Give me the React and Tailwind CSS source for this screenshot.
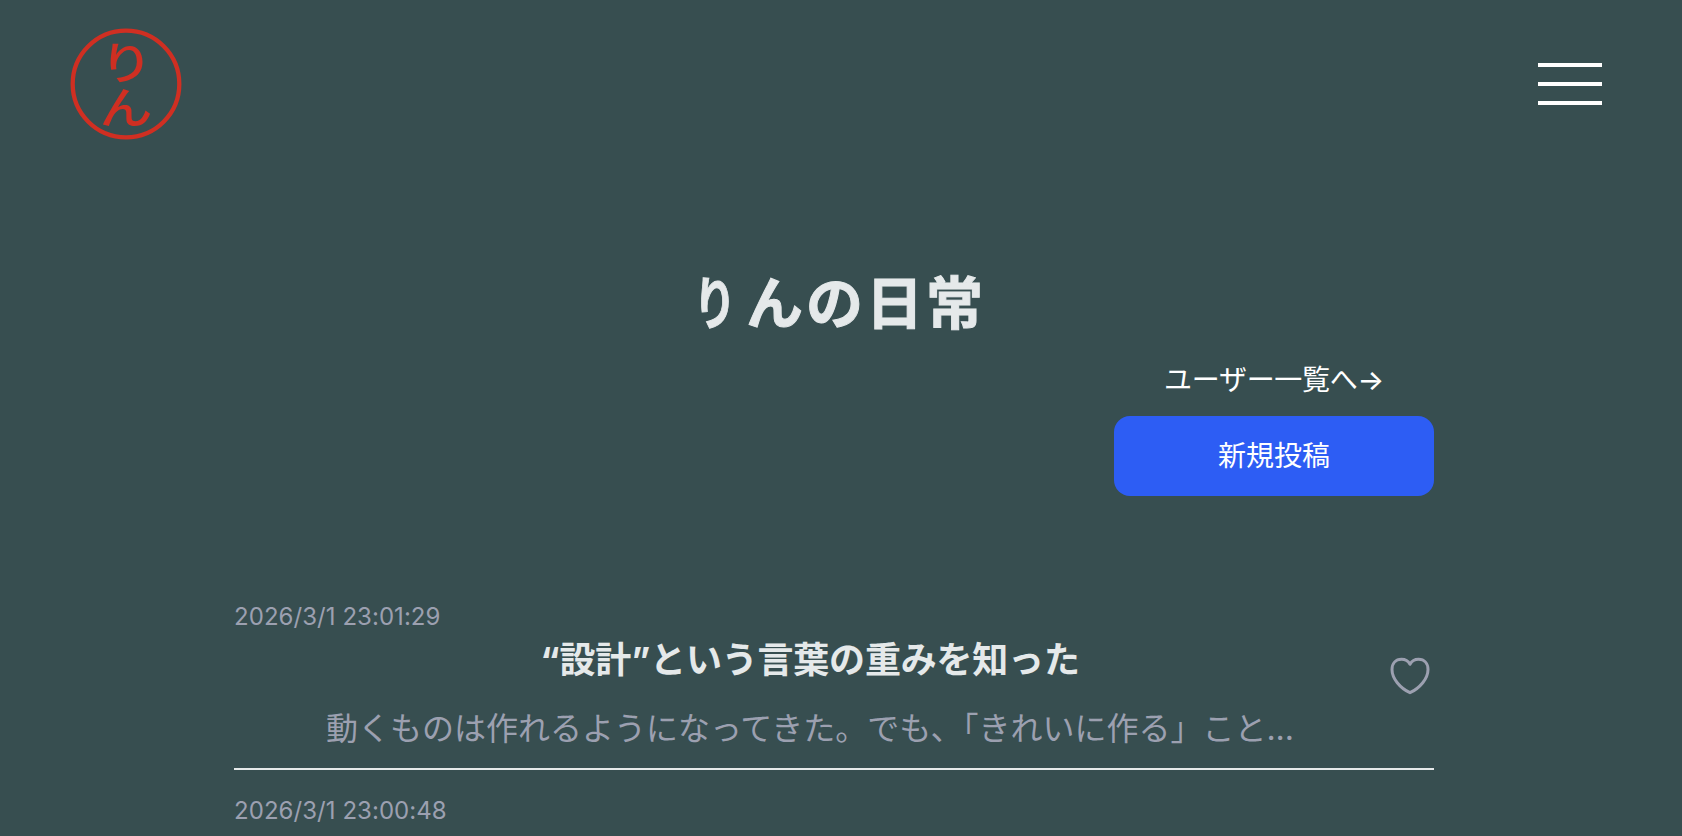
import React from "react";

const posts = [
  {
    id: 1,
    date: "2026/3/1 23:01:29",
    title: "“設計”という言葉の重みを知った",
    excerpt: "動くものは作れるようになってきた。でも、「きれいに作る」こと...",
  },
  { id: 2, date: "2026/3/1 23:00:48", title: "", excerpt: "" },
];

const HeartIcon = () => (
  <svg viewBox="0 0 48 48" className="w-12 h-12" fill="none" stroke="currentColor" strokeWidth="3" strokeLinejoin="round">
    <path d="M24 12.3C22.200 9 19.500 7.300 15.500 7.300C9.500 7.300 6 11.500 6 17.500C6 26.500 14 36 24 40.700C34 36 42 26.500 42 17.500C42 11.500 38.500 7.300 32.500 7.300C28.500 7.300 25.800 9 24 12.3Z" />
  </svg>
);

const Header = () => (
  <header className="flex items-center justify-between h-[168px] pl-[70px] pr-20">
    <a href="#" className="block">
      <svg viewBox="0 0 112 112" className="w-28 h-28">
        <circle cx="56" cy="56" r="53.300" fill="none" stroke="#d02f22" strokeWidth="4.300" />
        <text
          transform="translate(56 57) scale(1.2 1)"
          textAnchor="middle"
          fontSize="45"
          fill="#d02f22"
          className="font-['Noto_Sans_CJK_JP',sans-serif] font-medium [writing-mode:vertical-rl]"
        >
          りん
        </text>
      </svg>
    </a>
    <button className="flex flex-col gap-[15px] w-16" aria-label="メニュー">
      <span className="block w-full h-1 bg-white" />
      <span className="block w-full h-1 bg-white" />
      <span className="block w-full h-1 bg-white" />
    </button>
  </header>
);

const Post = ({ post }) => (
  <li className="border-b-2 border-[#e5e9ea] h-[194px] pt-[23px]">
    <time className="block text-2xl leading-[36px] tracking-[0.05px] text-[#9ca0b0]">{post.date}</time>
    <div className="flex items-center">
      <div className="w-[1152px] text-center">
        <h2 className="h-[50px] text-[36px] leading-[50px] tracking-[-0.2px] font-bold text-[#e5e9ea]">{post.title}</h2>
        <p className="mt-5 h-12 text-[32px] leading-[48px] text-[#9ca0b0]">{post.excerpt}</p>
      </div>
      <button className="-mt-9 text-[#9ca0b0]" aria-label="いいね">
        <HeartIcon />
      </button>
    </div>
  </li>
);

const App = () => {
  return (
    <div className="h-[836px] overflow-hidden bg-[#374e50] font-['Inter','Noto_Sans_CJK_JP',sans-serif]">
      <Header />
      <main className="w-[1200px] ml-[234px] pt-[92px]">
        <h1 className="pl-1 text-center text-[57px] leading-[88px] tracking-[3px] font-bold text-[#e5e9ea] [-webkit-text-stroke:1px_#e5e9ea]">
          <span className="inline-block scale-x-75">り</span>んの日常
        </h1>
        <div className="flex flex-col items-end">
          <div className="w-80 flex flex-col items-center text-[28px] text-white">
            <a href="#" className="block pt-[11px] leading-[42px] tracking-[-0.3px]">
              ユーザー一覧へ<span className="font-medium">→</span>
            </a>
            <button className="mt-[15px] w-full h-20 rounded-2xl bg-[#2d5df4]">新規投稿</button>
          </div>
        </div>
        <ul className="mt-[80px]">
          {posts.map((post) => (
            <Post key={post.id} post={post} />
          ))}
        </ul>
      </main>
    </div>
  );
};

export default App;
